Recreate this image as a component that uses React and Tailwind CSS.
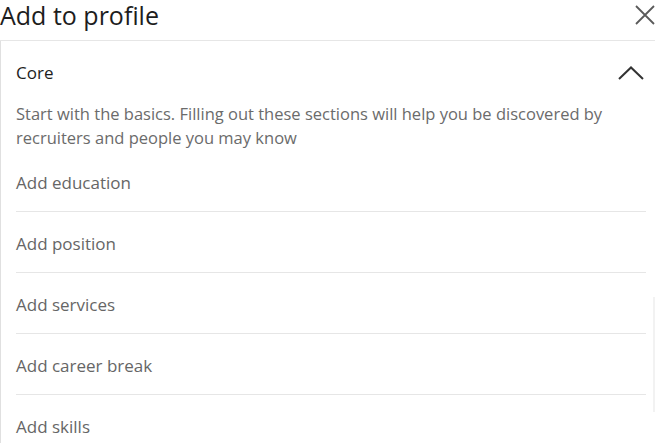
import React from "react";

const items = ["Add education", "Add position", "Add services", "Add career break", "Add skills"];

export default function App() {
  return (
    <div
      className="relative w-[655px] h-[443px] overflow-hidden bg-white"
      style={{ fontFamily: '"Open Sans", "Noto Sans", sans-serif' }}
    >
      <div className="flex h-[41px] items-start justify-between border-b border-[#e6e6e6]">
        <h2 className="text-[25px] leading-[31px] text-[#1d1d1d]">Add to profile</h2>
        <svg className="mt-[5px] mr-0" width="20" height="20" viewBox="0 0 20 20" fill="none">
          <path d="M1 1 L19 19 M19 1 L1 19" stroke="#5a5a5a" strokeWidth="1.8" />
        </svg>
      </div>
      <div className="border-l border-[#e0e0e0] pl-[15px] pr-[9px]">
        <div className="flex items-center justify-between pt-[20px]">
          <span className="text-[17px] leading-[24px] text-[#1d1d1d]">Core</span>
          <svg className="mr-[1px]" width="28" height="16" viewBox="0 0 28 16" fill="none">
            <path d="M2 14 L14 2.5 L26 14" stroke="#333" strokeWidth="2" />
          </svg>
        </div>
        <p className="mt-[17px] text-[16.5px] leading-[24px] text-[#6b6b6b]">
          Start with the basics. Filling out these sections will help you be discovered by recruiters and people you may know
        </p>
        {items.map((t, i) => (
          <div
            key={t}
            className={
              i === 0
                ? "pt-[21px] pb-[16px] border-b border-[#e6e6e6]"
                : i < items.length - 1
                ? "pt-[20px] pb-[16px] border-b border-[#e6e6e6]"
                : "pt-[20px] pb-[16px]"
            }
          >
            <span className="text-[17px] leading-[24px] text-[#666666]">{t}</span>
          </div>
        ))}
      </div>
      <div className="absolute right-0 top-[297px] h-[115px] w-[2px] bg-[#f2f2f2]" />
    </div>
  );
}
